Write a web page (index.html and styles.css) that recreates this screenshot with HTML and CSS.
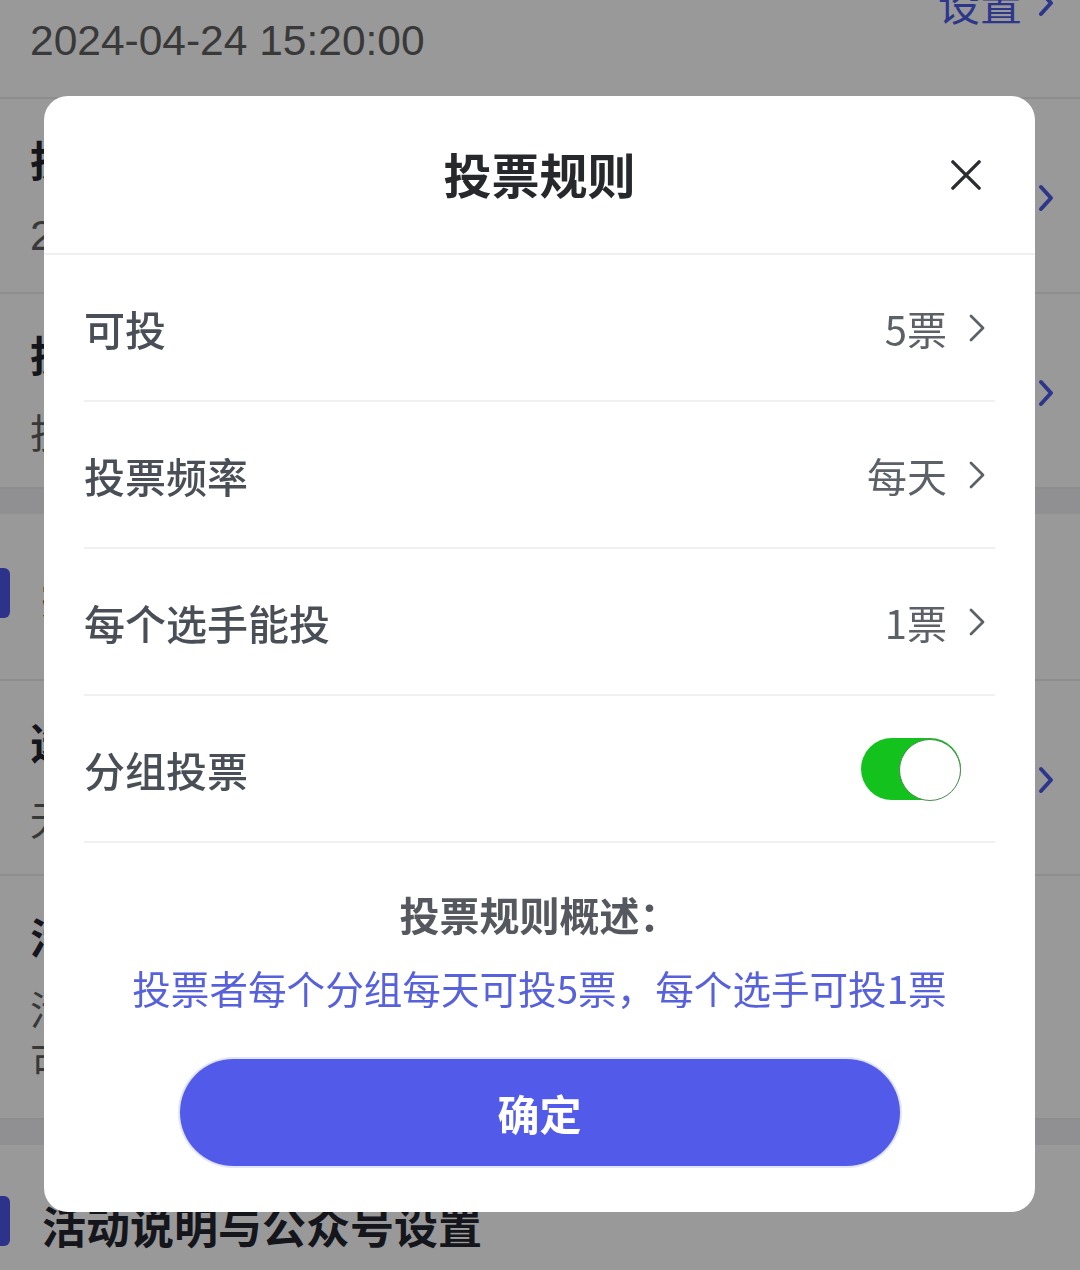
FILE: index.html
```html
<!DOCTYPE html>
<html lang="zh-CN">
<head>
<meta charset="utf-8">
<title>投票规则</title>
<link rel="stylesheet" href="styles.css">
</head>
<body>
<div class="page">
  <div class="row">
    <div class="row-main">
      <div class="row-title">投票开始时间</div>
      <div class="row-sub date">2024-04-24 15:20:00</div>
    </div>
    <div class="row-link">设置<svg class="bg-chev" viewBox="0 0 16 28"><path d="M3 3 L13 14 L3 25" /></svg></div>
  </div>
  <div class="row">
    <div class="row-main">
      <div class="row-title">投票结束时间</div>
      <div class="row-sub date">2024-05-24 15:20:00</div>
    </div>
    <svg class="bg-chev" viewBox="0 0 16 28"><path d="M3 3 L13 14 L3 25" /></svg>
  </div>
  <div class="row">
    <div class="row-main">
      <div class="row-title">投票规则</div>
      <div class="row-sub">投票者每个分组每天可投5票</div>
    </div>
    <svg class="bg-chev" viewBox="0 0 16 28"><path d="M3 3 L13 14 L3 25" /></svg>
  </div>
  <div class="gap"></div>
  <div class="section"><span class="bar"></span><span class="section-title">报名设置</span></div>
  <div class="row">
    <div class="row-main">
      <div class="row-title">选手报名</div>
      <div class="row-sub">无需审核</div>
    </div>
    <svg class="bg-chev" viewBox="0 0 16 28"><path d="M3 3 L13 14 L3 25" /></svg>
  </div>
  <div class="row row-tall">
    <div class="row-main">
      <div class="row-title">活动规则</div>
      <div class="row-sub multi">活动期间每位用户均可参与投票，<br>可在活动页面查看</div>
    </div>
  </div>
  <div class="gap"></div>
  <div class="section section-b"><span class="bar"></span><span class="section-title">活动说明与公众号设置</span></div>
</div>

<div class="mask"></div>

<div class="dialog">
  <div class="dlg-head">
    <h2 class="dlg-title">投票规则</h2>
    <svg class="close" viewBox="0 0 32 32"><path d="M2 2 L30 30 M30 2 L2 30" /></svg>
  </div>
  <div class="list">
    <div class="item">
      <span class="label">可投</span>
      <span class="value">5票<svg class="chev" viewBox="0 0 16 28"><path d="M2 2 L14 14 L2 26" /></svg></span>
    </div>
    <div class="item">
      <span class="label">投票频率</span>
      <span class="value">每天<svg class="chev" viewBox="0 0 16 28"><path d="M2 2 L14 14 L2 26" /></svg></span>
    </div>
    <div class="item">
      <span class="label">每个选手能投</span>
      <span class="value">1票<svg class="chev" viewBox="0 0 16 28"><path d="M2 2 L14 14 L2 26" /></svg></span>
    </div>
    <div class="item">
      <span class="label">分组投票</span>
      <span class="switch on"></span>
    </div>
  </div>
  <div class="summary">
    <div class="summary-title">投票规则概述：</div>
    <div class="summary-text">投票者每个分组每天可投5票，每个选手可投1票</div>
  </div>
  <button class="confirm">确定</button>
</div>
</body>
</html>
```

FILE: styles.css
```css
* {
  box-sizing: border-box;
  margin: 0;
  padding: 0;
}

html, body {
  width: 1080px;
  height: 1270px;
  overflow: hidden;
}

body {
  font-family: "Noto Sans CJK SC", "Noto Sans", sans-serif;
  background: #ffffff;
  color: #222;
}

/* ---------- background page ---------- */
.page {
  margin-top: -96px;
}

.row {
  display: flex;
  align-items: center;
  padding: 32px 28px 28px 30px;
  border-bottom: 2px solid #ececec;
}

.row-main {
  flex: 1;
  min-width: 0;
  white-space: nowrap;
}

.row-title {
  font-size: 42px;
  line-height: 56px;
  font-weight: 700;
  color: #242430;
}

.row-sub {
  margin-top: 21px;
  font-size: 40px;
  line-height: 56px;
  color: #5e5e5e;
}

.row-sub.date {
  font-family: "Liberation Sans", "Noto Sans", sans-serif;
  font-size: 42.5px;
  color: #606060;
}

.row-sub.multi {
  margin-top: 18px;
  line-height: 52px;
}

.row-tall {
  padding-bottom: 32px;
}

.row-link {
  display: flex;
  align-items: center;
  gap: 16px;
  font-size: 42px;
  color: #4a5ae8;
}

.bg-chev {
  width: 16px;
  height: 28px;
  flex: none;
  margin-right: -2px;
}

.bg-chev path {
  fill: none;
  stroke: #4a5ae8;
  stroke-width: 4;
  stroke-linecap: round;
  stroke-linejoin: round;
}

.gap {
  height: 25px;
  background: #f0f0f5;
}

.section {
  height: 167px;
  display: flex;
  align-items: center;
  gap: 32px;
  border-bottom: 2px solid #ececec;
}

.section .bar {
  margin-top: -8px;
}

.section-b {
  height: 160px;
  border-bottom: none;
}

.bar {
  width: 10px;
  height: 50px;
  background: #4b55e8;
  border-radius: 0 6px 6px 0;
  flex: none;
}

.section-title {
  font-size: 44px;
  font-weight: 700;
  color: #242430;
  line-height: 60px;
}

/* ---------- mask ---------- */
.mask {
  position: fixed;
  inset: 0;
  background: rgba(0, 0, 0, 0.4);
}

/* ---------- dialog ---------- */
.dialog {
  position: fixed;
  left: 44px;
  top: 96px;
  width: 991px;
  height: 1116px;
  background: #ffffff;
  border-radius: 24px;
  display: flex;
  flex-direction: column;
  overflow: hidden;
}

.dlg-head {
  position: relative;
  height: 159px;
  flex: none;
  display: flex;
  align-items: center;
  justify-content: center;
  border-bottom: 2px solid #efefef;
}

.dlg-title {
  font-size: 48px;
  font-weight: 700;
  color: #26282c;
  line-height: 60px;
  margin-top: -4px;
}

.close {
  position: absolute;
  right: 54px;
  top: 50%;
  width: 30px;
  height: 30px;
  transform: translateY(-50%);
}

.close path {
  fill: none;
  stroke: #2b2d31;
  stroke-width: 3.6;
  stroke-linecap: round;
}

.list {
  padding: 0 40px;
}

.item {
  height: 147px;
  display: flex;
  align-items: center;
  justify-content: space-between;
  border-bottom: 2px solid #f0f0f0;
}

.label {
  font-size: 41px;
  font-weight: 500;
  color: #4a4f57;
  line-height: 56px;
}

.value {
  display: flex;
  align-items: center;
  font-size: 40px;
  color: #5c6168;
  line-height: 56px;
}

.chev {
  width: 16px;
  height: 28px;
  margin-left: 22px;
  margin-right: 10px;
}

.chev path {
  fill: none;
  stroke: #5c6168;
  stroke-width: 2.8;
  stroke-linecap: round;
  stroke-linejoin: round;
}

.switch {
  position: relative;
  width: 100px;
  height: 62px;
  margin-right: 34px;
  border-radius: 31px;
  background: #13c21c;
}

.switch::after {
  content: "";
  position: absolute;
  right: 0;
  top: 1px;
  width: 60px;
  height: 60px;
  border-radius: 50%;
  background: #ffffff;
  border: 1.5px solid #4b8a50;
}

.summary {
  padding-top: 44px;
  text-align: center;
}

.summary-title {
  font-size: 40px;
  font-weight: 700;
  color: #55585e;
  line-height: 54px;
}

.summary-text {
  margin-top: 19px;
  font-size: 38.6px;
  color: #5761dc;
  line-height: 54px;
}

.confirm {
  display: block;
  width: 720px;
  height: 107px;
  margin: 45px auto 0;
  border: none;
  border-radius: 54px;
  background: #525be9;
  box-shadow: 0 0 0 2px #e2e4fb;
  color: #ffffff;
  font-family: "Noto Sans CJK SC", "Noto Sans", sans-serif;
  font-size: 42px;
  font-weight: 700;
  line-height: 1;
}
```
